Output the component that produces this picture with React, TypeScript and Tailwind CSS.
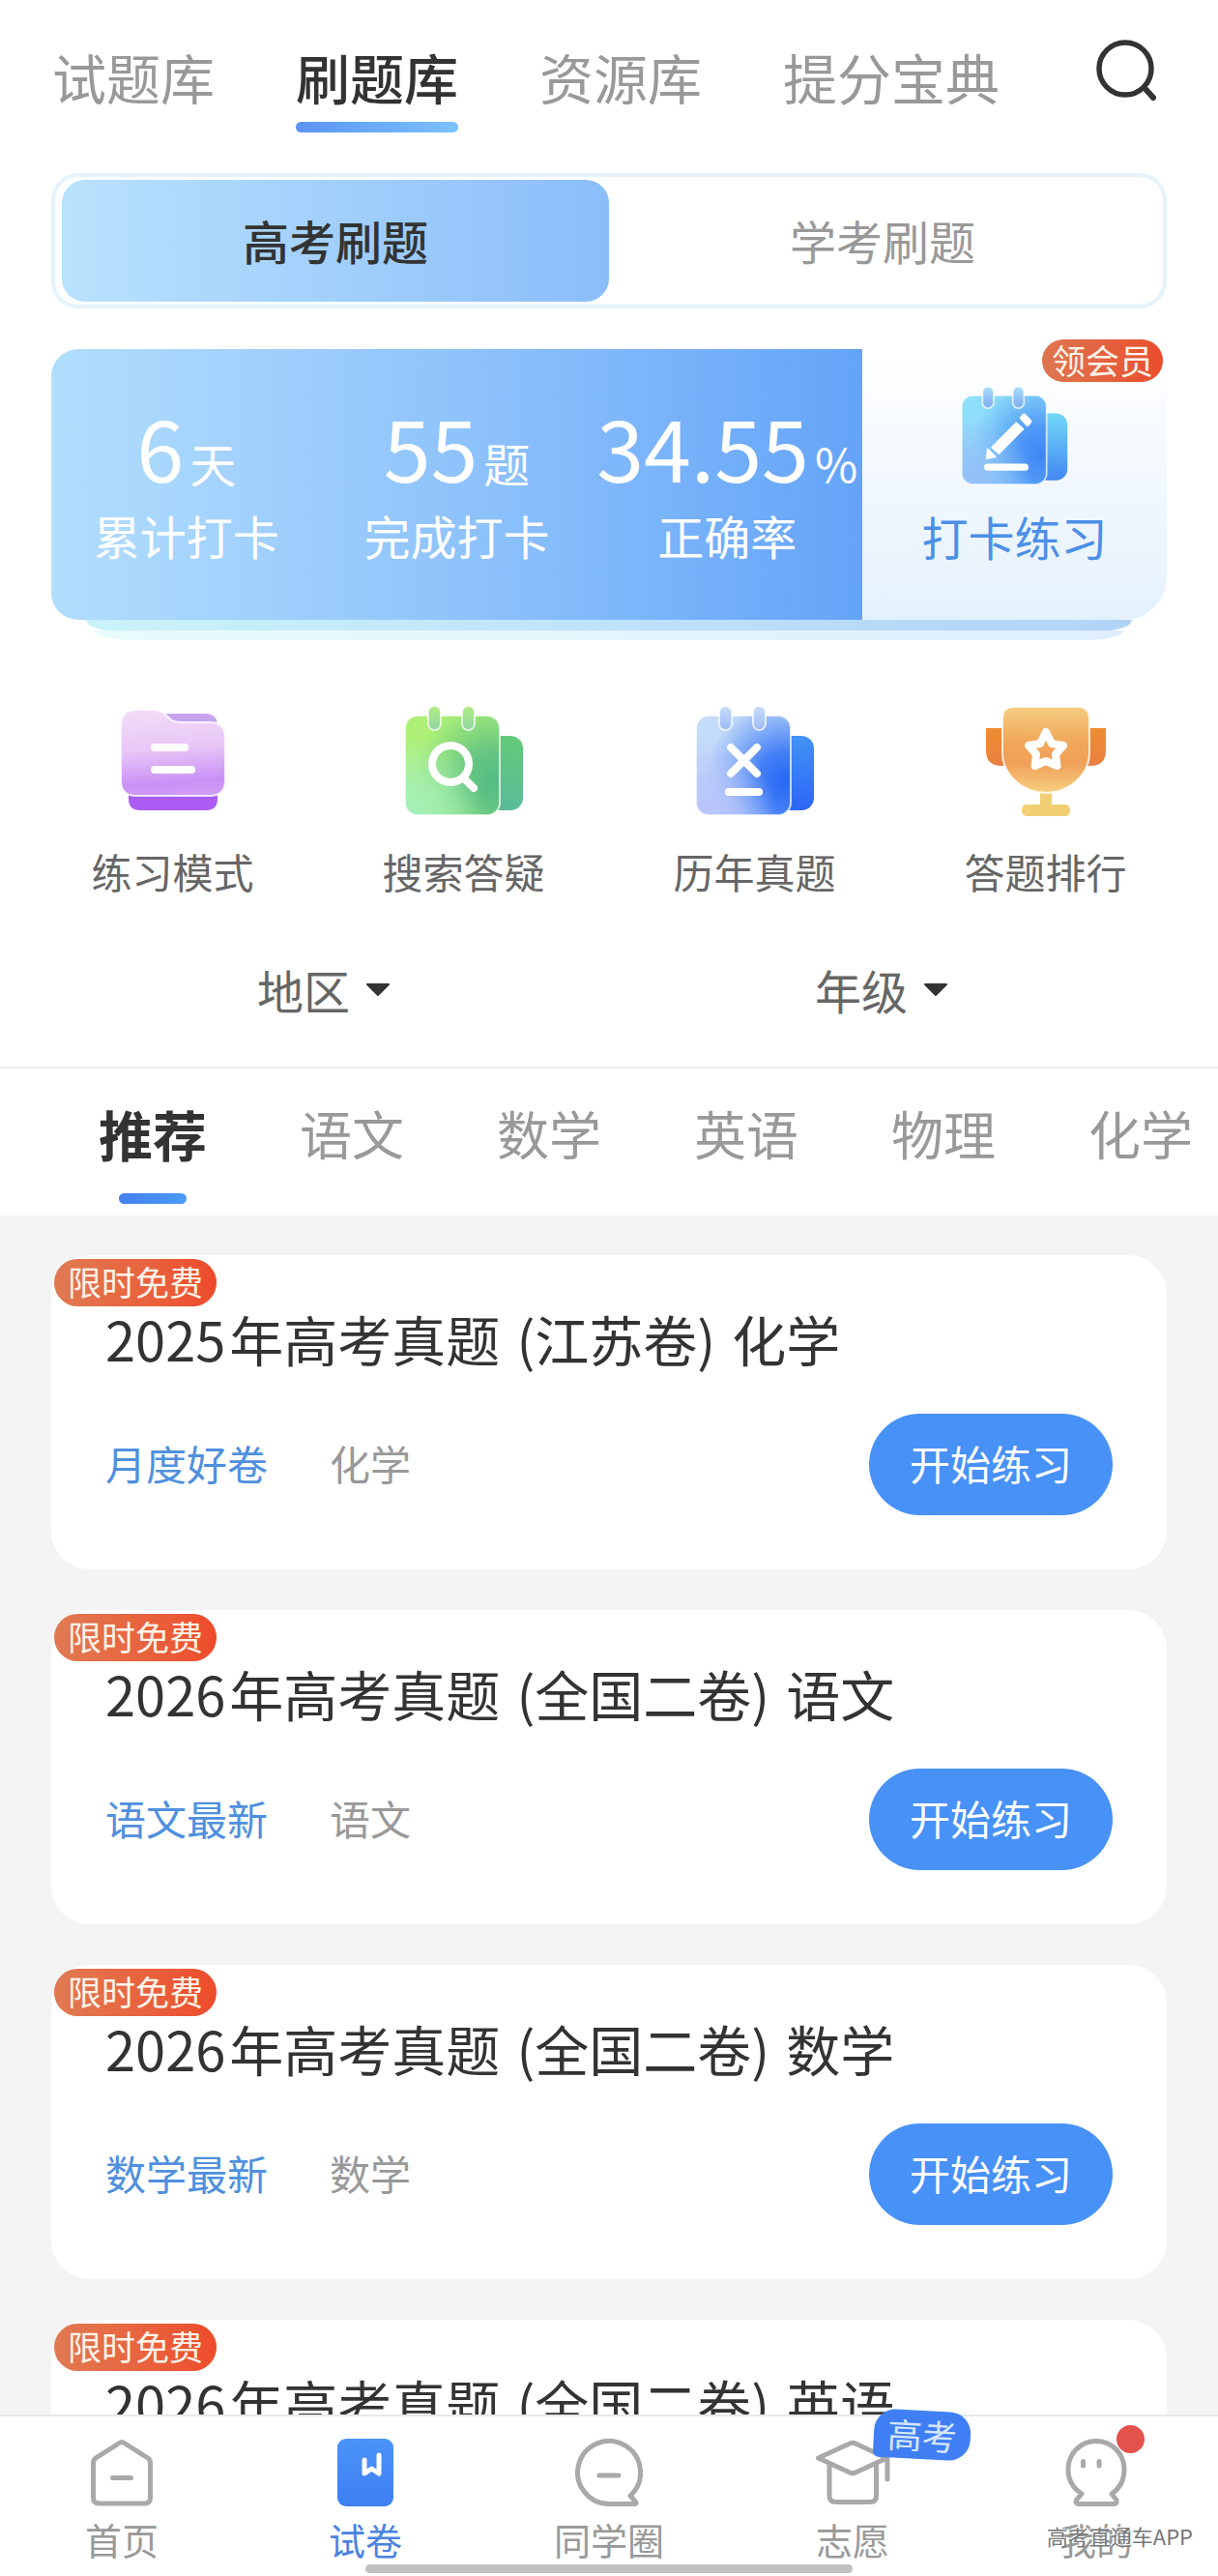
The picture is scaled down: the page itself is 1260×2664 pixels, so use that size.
import React, { useState } from "react";

type PadProps = {
  id: string;
  className: string;
  body: [string, string, string];
  back: [string, string];
  ring: [string, string];
  children: React.ReactNode;
};

/* Spiral notepad with a second sheet behind it; the mark on it comes as children. */
function Notepad({ id, className, body, back, ring, children }: PadProps) {
  return (
    <svg viewBox="0 0 126 120" className={className} fill="none" aria-hidden="true">
      <defs>
        <radialGradient id={`${id}-deep`} cx="0.95" cy="0.66" r="0.85">
          <stop offset="0" stopColor={body[1]} />
          <stop offset="0.35" stopColor={body[1]} stopOpacity="0.8" />
          <stop offset="1" stopColor={body[1]} stopOpacity="0" />
        </radialGradient>
        <radialGradient id={`${id}-glow`} cx="0.05" cy="1" r="0.8">
          <stop offset="0" stopColor={body[2]} />
          <stop offset="0.4" stopColor={body[2]} stopOpacity="0.8" />
          <stop offset="1" stopColor={body[2]} stopOpacity="0" />
        </radialGradient>
        <linearGradient id={`${id}-back`} x1="0" y1="0" x2="0" y2="1">
          <stop offset="0" stopColor={back[0]} />
          <stop offset="1" stopColor={back[1]} />
        </linearGradient>
        <linearGradient id={`${id}-ring`} x1="0" y1="0" x2="0" y2="1">
          <stop offset="0" stopColor={ring[0]} />
          <stop offset="1" stopColor={ring[1]} />
        </linearGradient>
      </defs>
      <rect x="84" y="35" width="40" height="77" rx="13" fill={`url(#${id}-back)`} />
      <rect x="2" y="14" width="98" height="103" rx="13" fill={body[0]} />
      <rect x="2" y="14" width="98" height="103" rx="13" fill={`url(#${id}-deep)`} />
      <rect x="2" y="14" width="98" height="103" rx="13" fill={`url(#${id}-glow)`} stroke="#ffffff" strokeOpacity="0.7" strokeWidth="2" />
      <rect x="26" y="4" width="13" height="25" rx="6.5" fill={`url(#${id}-ring)`} stroke="#ffffff" strokeOpacity="0.7" strokeWidth="2" />
      <rect x="61" y="4" width="13" height="25" rx="6.5" fill={`url(#${id}-ring)`} stroke="#ffffff" strokeOpacity="0.7" strokeWidth="2" />
      {children}
    </svg>
  );
}

function CheckInIcon() {
  return (
    <Notepad
      id="checkin"
      className="h-[108px] w-[113px]"
      body={["#8fdffa", "#3f86f5", "#93c0f8"]}
      back={["#72d8f7", "#4388f3"]}
      ring={["#a9ddfb", "#7eabf1"]}
    >
      <path d="M37 74 L65 46 L73 53 L45 81 Z" fill="#fff" stroke="#fff" strokeWidth="2" strokeLinejoin="round" />
      <path d="M32 76 L41 85 L31 87 Z" fill="#fff" stroke="#fff" strokeWidth="2" strokeLinejoin="round" />
      <path d="M71 40 L74 37 L81 44 L78 48 Z" fill="#fff" stroke="#fff" strokeWidth="4" strokeLinejoin="round" />
      <path d="M32 97 H75" stroke="#fff" strokeWidth="8" strokeLinecap="round" />
    </Notepad>
  );
}

function SearchPadIcon() {
  return (
    <Notepad
      id="search"
      className="h-[120px] w-[126px]"
      body={["#aef078", "#53bb84", "#a4efb8"]}
      back={["#63ca77", "#5abb98"]}
      ring={["#b0ec80", "#90d6a4"]}
    >
      <circle cx="49" cy="64" r="19" stroke="#fff" strokeWidth="8" />
      <path d="M63 79 L73 89" stroke="#fff" strokeWidth="8" strokeLinecap="round" />
    </Notepad>
  );
}

function PastPaperIcon() {
  return (
    <Notepad
      id="past"
      className="h-[120px] w-[126px]"
      body={["#c4dcfa", "#2468f5", "#b7c4fa"]}
      back={["#4292f6", "#2c66f6"]}
      ring={["#c9ddfb", "#9dbbf5"]}
    >
      <path d="M38 47 L65 74 M65 47 L38 74 M36 93 H67" stroke="#fff" strokeWidth="8" strokeLinecap="round" />
    </Notepad>
  );
}

function FolderIcon() {
  return (
    <svg viewBox="0 0 126 120" className="h-[120px] w-[126px]" fill="none" aria-hidden="true">
      <defs>
        <linearGradient id="folder-front" x1="0.4" y1="0" x2="0.5" y2="1">
          <stop offset="0" stopColor="#f2dcf8" />
          <stop offset="0.45" stopColor="#e8c6f6" />
          <stop offset="0.85" stopColor="#c890f6" />
          <stop offset="1" stopColor="#cf9cf6" />
        </linearGradient>
      </defs>
      <path d="M50 12 H96 Q109 12 109 25 V40 H50 Z" fill="#c9a3f0" />
      <path d="M17 90 H109 V100 Q109 112 97 112 H29 Q17 112 17 100 Z" fill="#aa5cf3" />
      <path
        d="M9 24 Q9 8 25 8 H42 C58 8 56 21 70 21 H101 Q117 21 117 37 V81 Q117 97 101 97 H25 Q9 97 9 81 Z"
        fill="url(#folder-front)"
        stroke="#fff"
        strokeOpacity="0.8"
        strokeWidth="2"
      />
      <path d="M44 47 H75 M44 70 H82" stroke="#fff" strokeWidth="8" strokeLinecap="round" />
    </svg>
  );
}

function TrophyIcon() {
  return (
    <svg viewBox="0 0 126 120" className="h-[120px] w-[126px]" fill="none" aria-hidden="true">
      <defs>
        <linearGradient id="cup-bowl" x1="0" y1="0" x2="0" y2="1">
          <stop offset="0" stopColor="#f4cd82" />
          <stop offset="0.4" stopColor="#f1a85a" />
          <stop offset="0.65" stopColor="#f0a058" />
          <stop offset="1" stopColor="#f5d080" />
        </linearGradient>
        <linearGradient id="cup-ear" x1="0" y1="0" x2="0" y2="1">
          <stop offset="0" stopColor="#ee8e30" />
          <stop offset="1" stopColor="#ea7f42" />
        </linearGradient>
      </defs>
      <path d="M1 27 H30 V66 H17 Q1 66 1 50 Z" fill="url(#cup-ear)" />
      <path d="M125 27 H96 V66 H109 Q125 66 125 50 Z" fill="url(#cup-ear)" />
      <path d="M57 90 H69 V108 H57 Z" fill="#f3cf74" />
      <rect x="38" y="106" width="50" height="12" rx="5" fill="#f3cf74" />
      <path
        d="M30 5 H96 Q108 5 108 17 V52 C108 76 86 94 63 94 C40 94 18 76 18 52 V17 Q18 5 30 5 Z"
        fill="url(#cup-bowl)"
        stroke="#fff"
        strokeOpacity="0.8"
        strokeWidth="2"
      />
      <path
        d="M63 31 L69 43 L81 45 L73 54 L74.500 66 L63 61 L51.500 66 L53 54 L45 45 L57 43 Z"
        stroke="#fff"
        strokeWidth="8"
        strokeLinejoin="round"
      />
    </svg>
  );
}

const topTabs = ["试题库", "刷题库", "资源库", "提分宝典"];
const modes = ["高考刷题", "学考刷题"];
const stats = [
  { value: "6", unit: "天", label: "累计打卡" },
  { value: "55", unit: "题", label: "完成打卡" },
  { value: "34.55", unit: "%", label: "正确率" },
];
const tools = [
  { label: "练习模式", icon: <FolderIcon /> },
  { label: "搜索答疑", icon: <SearchPadIcon /> },
  { label: "历年真题", icon: <PastPaperIcon /> },
  { label: "答题排行", icon: <TrophyIcon /> },
];
const subjects = ["推荐", "语文", "数学", "英语", "物理", "化学"];
const papers = [
  { year: "2025", region: "江苏卷", subject: "化学", tag: "月度好卷" },
  { year: "2026", region: "全国二卷", subject: "语文", tag: "语文最新" },
  { year: "2026", region: "全国二卷", subject: "数学", tag: "数学最新" },
  { year: "2026", region: "全国二卷", subject: "英语", tag: "英语最新" },
];

const line = { stroke: "#a9a9a9", strokeWidth: 5, strokeLinecap: "round", strokeLinejoin: "round" } as const;

const bottomItems = [
  {
    label: "首页",
    icon: (
      <svg viewBox="0 0 70 70" className="h-[70px] w-[70px]" fill="none" aria-hidden="true">
        <path {...line} d="M37.500 4.500 L62 20 Q64.500 22 64.500 25 V61 Q64.500 67 58.500 67 H11.500 Q5.500 67 5.500 61 V25 Q5.500 22 8 20 L32.500 4.500 Q35 2.500 37.500 4.500 Z" />
        <path {...line} d="M25.500 40.500 H44.500" />
      </svg>
    ),
  },
  {
    label: "试卷",
    icon: (
      <svg viewBox="0 0 58 70" className="h-[70px] w-[58px]" fill="none" aria-hidden="true">
        <defs>
          <linearGradient id="paper-fill" x1="0" y1="0" x2="0" y2="1">
            <stop offset="0" stopColor="#4a93f8" />
            <stop offset="1" stopColor="#3f7ff4" />
          </linearGradient>
        </defs>
        <rect width="58" height="70" rx="9" fill="url(#paper-fill)" />
        <path d="M28 22 V36 L35.500 31 L43 36 V17" stroke="#fff" strokeWidth="5" strokeLinecap="round" strokeLinejoin="round" />
      </svg>
    ),
  },
  {
    label: "同学圈",
    icon: (
      <svg viewBox="0 0 70 70" className="h-[70px] w-[70px]" fill="none" aria-hidden="true">
        <path {...line} d="M35 67.500 A32.500 32.500 0 1 1 57 59 L63 66 Q63.500 67.500 62 67.500 Z" />
        <path {...line} d="M25 38 H45" />
      </svg>
    ),
  },
  {
    label: "志愿",
    icon: (
      <svg viewBox="0 0 78 70" className="h-[70px] w-[78px]" fill="none" aria-hidden="true">
        <path {...line} d="M3.500 20 L36 5 Q39 3.500 42 5 L74.500 20 L42 35 Q39 36.500 36 35 Z" />
        <path {...line} d="M15 26 V59 Q15 65.500 21.500 65.500 H57 Q63.500 65.500 63.500 59 V26 M75 20 V42" />
      </svg>
    ),
  },
  {
    label: "我的",
    icon: (
      <svg viewBox="0 0 70 70" className="h-[70px] w-[70px]" fill="none" aria-hidden="true">
        <path {...line} d="M20 57 C11 51 6 42 6 32 C6 15 19 2.500 35 2.500 C51 2.500 64 15 64 32 C64 42 60 51 51 57 L56 63.500 Q57 67.500 53 67.500 H17 Q13 67.500 14.500 63.500 Z" />
        <path {...line} d="M21.500 23.500 V28 M38 23.500 V28" />
      </svg>
    ),
  },
];

export default function App() {
  const [tab, setTab] = useState(1);
  const [mode, setMode] = useState(0);
  const [subject, setSubject] = useState(0);

  return (
    <div className="flex h-screen flex-col overflow-hidden bg-white font-['Noto_Sans_CJK_SC',sans-serif] text-[#333]">
      <header className="flex items-start justify-between pt-[45px] pr-[60px] pl-[54px]">
        <nav className="flex gap-[84px]">
          {topTabs.map((name, i) => (
            <button
              key={name}
              type="button"
              onClick={() => setTab(i)}
              className={`flex flex-col items-center text-[56px] leading-[68px] whitespace-nowrap ${i === tab ? "font-medium text-[#333]" : "text-[#999]"}`}
            >
              {name}
              {i === tab && <span className="mt-[13px] h-[11px] w-full rounded-full bg-linear-to-r from-[#5b94f3] to-[#7cc2fc]" />}
            </button>
          ))}
        </nav>
        <button type="button" aria-label="搜索" className="-mt-1">
          <svg viewBox="0 0 68 68" className="h-[68px] w-[68px]" fill="none" stroke="#333" aria-hidden="true">
            <circle cx="32" cy="30" r="27" strokeWidth="5.5" />
            <path d="M52 50 L61 60" strokeWidth="6" strokeLinecap="round" />
          </svg>
        </button>
      </header>

      <div className="mx-[53px] mt-[42px] flex rounded-[28px] border-4 border-[#e5f3fa] px-[7px] py-[3px]">
        {modes.map((name, i) => (
          <button
            key={name}
            type="button"
            onClick={() => setMode(i)}
            className={`h-[126px] flex-1 rounded-3xl pb-0.5 text-5xl ${i === mode ? "bg-linear-to-r from-[#b9e2fd] to-[#8bbdfa] font-medium text-[#333]" : "text-[#999]"}`}
          >
            {name}
          </button>
        ))}
      </div>

      <section className="mx-[53px] mt-[42px]">
        <div className="flex h-[280px]">
          <dl className="grid flex-1 grid-cols-3 rounded-l-[28px] bg-linear-to-r from-[#b2defd] via-[#8fc3fb] to-[#64a4f8] pt-[52px] text-center text-white">
            {stats.map((s) => (
              <div key={s.label} className="flex flex-col-reverse justify-end gap-3">
                <dt className="text-5xl leading-[64px]">{s.label}</dt>
                <dd className="flex items-baseline justify-center gap-1.5 text-[88px] leading-[96px]">
                  {s.value}
                  <span className="text-5xl">{s.unit}</span>
                </dd>
              </div>
            ))}
          </dl>
          <button
            type="button"
            className="relative flex w-[315px] flex-col items-center rounded-br-[44px] bg-linear-to-b from-white to-[#e4f1fd] pt-[35px] text-5xl leading-[64px] text-[#4c8fe6]"
          >
            <CheckInIcon />
            <span className="mt-[18px]">打卡练习</span>
            <span className="absolute -top-[10px] right-1 flex h-11 w-[125px] items-center justify-center rounded-full bg-linear-to-r from-[#dd7650] to-[#ea4c2c] pb-1 text-[35px] leading-none whitespace-nowrap text-[#fff4ea]">
              领会员
            </span>
          </button>
        </div>
        <div className="mx-9 h-[11px] bg-linear-to-r from-[#c9f3fa] via-[#bfe2fb] to-[#b0d3f8] [border-radius:0_0_28px_28px/0_0_11px_11px]" />
        <div className="mx-11 h-[10px] bg-linear-to-r from-[#e9fbfb] to-[#dfeefd] [border-radius:0_0_40px_40px/0_0_10px_10px]" />
      </section>

      <div className="mx-7 mt-16 grid grid-cols-4">
        {tools.map((t) => (
          <button key={t.label} type="button" className="flex flex-col items-center gap-[31px] text-[42px] leading-[48px] text-[#666]">
            {t.icon}
            {t.label}
          </button>
        ))}
      </div>

      <div className="mx-[53px] mt-[66px] mb-12 grid grid-cols-2">
        {["地区", "年级"].map((name) => (
          <div key={name} className="flex justify-center pr-3">
            <label className="relative flex items-center">
              <select aria-label={name} className="appearance-none bg-transparent pr-[42px] text-5xl leading-[64px] text-[#666] outline-none">
                <option>{name}</option>
              </select>
              <svg viewBox="0 0 28 16" className="pointer-events-none absolute right-0 h-4 w-7" aria-hidden="true">
                <path d="M3 3 H25 L14 14 Z" fill="#333" stroke="#333" strokeWidth="2" strokeLinejoin="round" />
              </svg>
            </label>
          </div>
        ))}
      </div>

      <nav className="flex shrink-0 items-start overflow-hidden border-t-2 border-[#ececec] pt-[31px] pb-3 pl-[54px]">
        {subjects.map((name, i) => (
          <button
            key={name}
            type="button"
            onClick={() => setSubject(i)}
            className={`flex shrink-0 flex-col items-center px-12 leading-[72px] ${i === subject ? "text-[56px] font-bold text-[#333]" : "text-[54px] text-[#999]"}`}
          >
            {name}
            {i === subject && <span className="mt-[26px] h-[11px] w-[70px] rounded-full bg-linear-to-r from-[#437ff0] to-[#4b9cf8]" />}
          </button>
        ))}
      </nav>

      <main className="flex min-h-0 flex-1 flex-col gap-[42px] overflow-hidden bg-[#f4f4f4] px-[53px] pt-[41px]">
        {papers.map((p) => (
          <article key={p.year + p.subject} className="relative shrink-0 rounded-[40px] bg-white px-14 pt-[54px] pb-14">
            <span className="absolute top-1 left-[3px] flex h-[49px] w-[168px] items-center justify-center rounded-full bg-linear-to-r from-[#e07a52] to-[#ee4b2b] pb-1 text-[35px] leading-none text-[#fff4ea]">
              限时免费
            </span>
            <h2 className="text-[56px] leading-[64px] whitespace-nowrap text-[#333]">
              <span className="mr-1">{p.year}</span>年高考真题
              <span className="inline-block w-9 text-right">(</span>
              {p.region}
              <span className="inline-block w-9 text-left">)</span>
              {p.subject}
            </h2>
            <div className="mt-[46px] flex items-center text-[42px]">
              <span className="pb-1 text-[#4f90de]">{p.tag}</span>
              <span className="ml-16 pb-1 text-[#999]">{p.subject}</span>
              <button type="button" className="ml-auto h-[105px] w-[252px] rounded-full bg-[#4791f7] pb-1 text-white">
                开始练习
              </button>
            </div>
          </article>
        ))}
      </main>

      <footer className="relative z-10 shrink-0 border-t-2 border-[#e8e8e8] bg-white pb-[3px]">
        <nav className="grid grid-cols-5">
          {bottomItems.map((item, i) => (
            <a
              key={item.label}
              href="#"
              className={`relative flex flex-col items-center gap-2.5 pt-[23px] pb-0.5 text-[38px] leading-[48px] ${i === 1 ? "text-[#4a83e0]" : "text-[#999]"}`}
            >
              {item.icon}
              {item.label}
              {i === 3 && (
                <span className="absolute -top-1.5 left-1/2 ml-[22px] flex h-[50px] w-[100px] rotate-3 items-center justify-center rounded-[22px] rounded-bl-md bg-[#3f7ff3] pb-0.5 text-4xl leading-none text-[#d5e5ff]">
                  高考
                </span>
              )}
              {i === 4 && <span className="absolute top-[9px] left-1/2 ml-[21px] h-[29px] w-[29px] rounded-full bg-[#e4524c]" />}
            </a>
          ))}
        </nav>
        <div className="mx-auto h-[9px] w-2/5 rounded-full bg-[#c1c1c1]" />
        <span className="pointer-events-none absolute right-[26px] bottom-[26px] text-[22px] leading-8 text-[#777] [text-shadow:-1px_-1px_0_#fff]">高考直通车APP</span>
      </footer>
    </div>
  );
}
